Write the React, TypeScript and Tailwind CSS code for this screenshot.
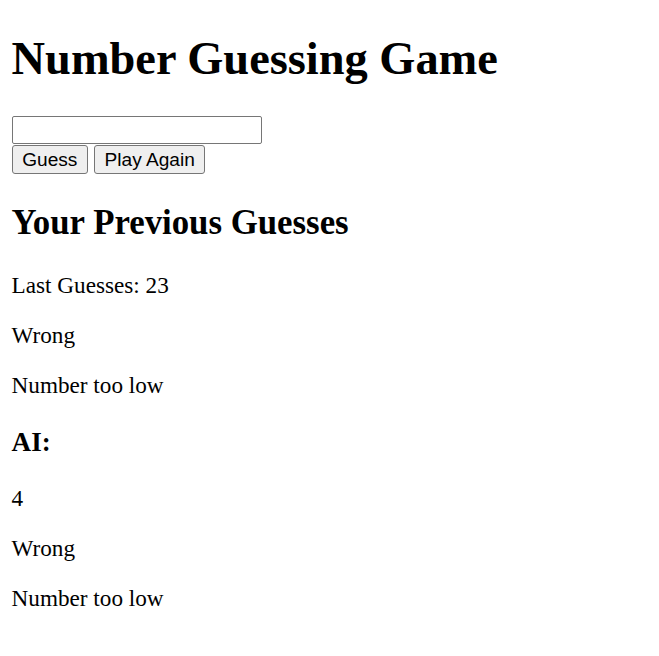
import React from "react";

export default function App() {
  const serif = { fontFamily: '"Liberation Serif", "Times New Roman", serif' } as const;
  return (
    <div className="px-[11.6px] text-black bg-white" style={serif}>
      <h1 className="text-[46.4px] font-bold leading-[normal] mt-[32.2px] mb-[31.1px]">Number Guessing Game</h1>
      <input
        type="text"
        className="block w-[250px] h-[28px] border border-[#767676] rounded-[2px] bg-white outline-none"
      />
      <div className="flex gap-[6px] mt-[1px]" style={{ fontFamily: '"Liberation Sans", Arial, sans-serif' }}>
        <button className="h-[28.6px] px-[9.6px] text-[19.1px] leading-none bg-[#efefef] border border-[#767676] rounded-[3px] text-black">
          Guess
        </button>
        <button className="h-[28.6px] px-[9.6px] text-[19.1px] leading-none bg-[#efefef] border border-[#767676] rounded-[3px] text-black">
          Play Again
        </button>
      </div>
      <h2 className="text-[34.8px] font-bold leading-[normal] mt-[29.3px] mb-[28.9px]">Your Previous Guesses</h2>
      <p className="text-[23.2px] leading-[normal] my-[23.2px]">Last Guesses: 23</p>
      <p className="text-[23.2px] leading-[normal] my-[23.2px]">Wrong</p>
      <p className="text-[23.2px] leading-[normal] my-[23.2px]">Number too low</p>
      <h3 className="text-[27.1px] font-bold leading-[normal] my-[27.1px]">AI:</h3>
      <p className="text-[23.2px] leading-[normal] my-[23.2px]">4</p>
      <p className="text-[23.2px] leading-[normal] my-[23.2px]">Wrong</p>
      <p className="text-[23.2px] leading-[normal] my-[23.2px]">Number too low</p>
    </div>
  );
}
